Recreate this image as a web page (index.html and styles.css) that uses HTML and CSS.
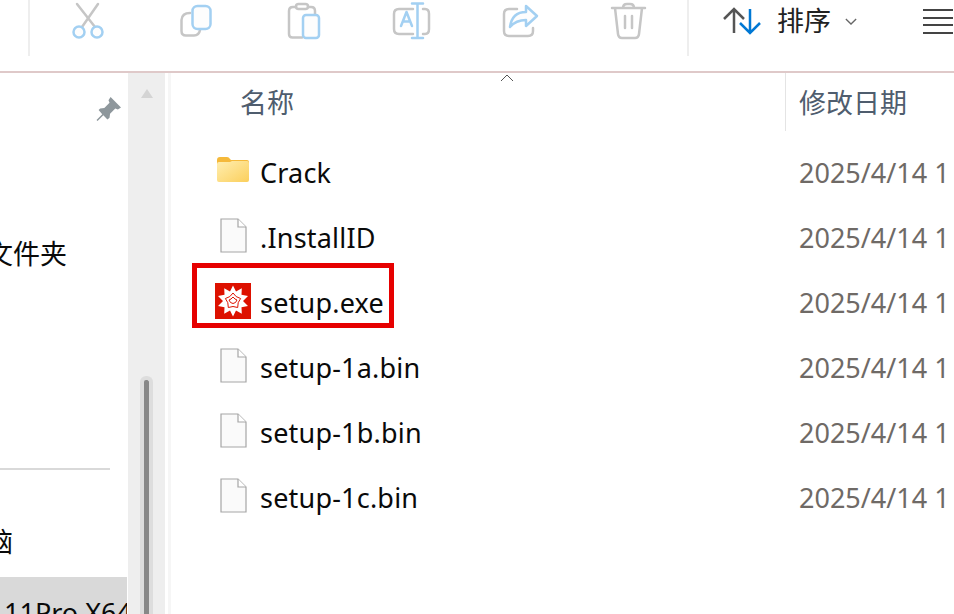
FILE: index.html
```html
<!DOCTYPE html>
<html lang="zh-CN">
<head>
  <meta charset="UTF-8">
  <meta name="viewport" content="width=device-width, initial-scale=1.0">
  <title>文件资源管理器</title>
  <link rel="stylesheet" href="styles.css">
</head>
<body>
  <div class="toolbar">
    <div class="sep"></div>
    <div class="tools">
      <!-- cut -->
      <svg class="tool" viewBox="0 0 48 48">
        <path class="gray" d="M13 4 L31 27 M34 4 L18 27"/>
        <circle class="blue" cx="15" cy="32" r="5.5"/>
        <circle class="blue" cx="33" cy="32" r="5.5"/>
      </svg>
      <!-- copy -->
      <svg class="tool" viewBox="0 0 48 48">
        <path class="gray" d="M18 13 Q10 13 9.5 20 V31 Q9.5 35.5 14 35.5 H22 Q27 35.5 28 30"/>
        <rect class="blue" x="20.5" y="6" width="18" height="23" rx="5"/>
      </svg>
      <!-- paste -->
      <svg class="tool" viewBox="0 0 48 48">
        <path class="gray" d="M16 7 H13 Q9 7 9 11 V34 Q9 37.5 12.500 37.500 H22 M28 7 H31 Q35 7 35 11 V14"/>
        <rect class="gray" x="16" y="4" width="12" height="5" rx="2.500"/>
        <rect class="blue" x="23" y="15" width="16" height="23" rx="3"/>
      </svg>
      <!-- rename -->
      <svg class="tool" viewBox="0 0 48 48">
        <path class="gray" d="M25 9 H11 Q6 9 6 14 V29 Q6 34 11 34 H25 M35 9 H37 Q41 9 41 14 V29 Q41 34 37 34 H35"/>
        <path class="blue" d="M24 3.500 H35 M24 38 H35 M29.500 3.500 V38 M13 26 L18.500 12 L24 26 M15 21.500 H22"/>
      </svg>
      <!-- share -->
      <svg class="tool" viewBox="0 0 48 48">
        <path class="gray" d="M21 9 H13 Q8 9 8 14 V31 Q8 36 13 36 H32 Q37 36 37 31 V28"/>
        <path class="blue" d="M30 6 L41 16 L30 26 V20 Q20 20 14 27 Q16 12 30 12 Z"/>
      </svg>
      <!-- delete -->
      <svg class="tool" viewBox="0 0 48 48">
        <path class="gray" d="M8 8 H41 M19 8 Q19 4 23 4 H26 Q30 4 30 8 M11 8 L14 34 Q14.500 38 18 38 H31 Q34.500 38 35 34 L38 8 M21 16 V28 M28 16 V28"/>
      </svg>
    </div>
    <div class="sep sep-right"></div>
    <div class="sort">
      <svg class="sort-arrows" viewBox="0 0 38 28">
        <path class="up" d="M12 26 V2 M2 12 L12 2 L22 12"/>
        <path class="down" d="M28 2 V26 M18 16 L28 26 L38 16"/>
      </svg>
      <span class="sort-label">排序</span>
      <svg class="chevron" viewBox="0 0 14 8"><path d="M1 1 L7 7 L13 1"/></svg>
    </div>
    <svg class="view" viewBox="0 0 30 26">
      <path d="M0 2 H30 M0 10 H30 M0 17 H30 M0 25 H30"/>
    </svg>
  </div>

  <div class="content">
    <div class="sidebar">
      <div class="pin-row">
        <svg class="pin" viewBox="0 0 24 24">
          <path d="M14 0 L24 10 L21 12 L18.500 11 L13.500 16 L13 20 L11 21.500 L7 17.500 L1.500 23 L0.500 22 L6 16.500 L2.500 12.500 L4 11 L8 10.500 L13 5.500 L12 3 Z"/>
        </svg>
      </div>
      <div class="side-text folder-text"><span>文件夹</span></div>
      <div class="side-line"></div>
      <div class="side-text pc-text"><span>脑</span></div>
      <div class="side-selected">11Pro X64</div>
    </div>

    <div class="scrollbar">
      <div class="scroll-up"></div>
      <div class="scroll-thumb"></div>
    </div>

    <div class="main">
      <div class="list-head">
        <div class="head-name">名称</div>
        <div class="head-date">修改日期</div>
        <svg class="sort-mark" viewBox="0 0 14 8"><path d="M1 7 L7 1 L13 7"/></svg>
      </div>
      <div class="rows">
        <div class="row">
          <div class="icon icon-folder">
            <svg class="folder" viewBox="0 0 32 25">
              <defs>
                <linearGradient id="folderFill" x1="0" y1="0" x2="1" y2="1">
                  <stop offset="0" stop-color="#ffeeb0"/>
                  <stop offset="1" stop-color="#fbcf5c"/>
                </linearGradient>
              </defs>
              <path fill="#f5b93a" d="M0 3 Q0 0 3 0 H10 Q12 0 13 2 L14 3 H30 Q32 3 32 5 V10 H0 Z"/>
              <path fill="url(#folderFill)" d="M0 7 Q0 5 2 5 H13 L15 4 H30 Q32 4 32 6 V23 Q32 25 30 25 H2 Q0 25 0 23 Z"/>
            </svg>
          </div>
          <div class="name">Crack</div>
          <div class="date">2025/4/14 1</div>
        </div>
        <div class="row">
          <div class="icon">
            <svg class="file" viewBox="0 0 27 35"><path class="sheet" d="M1 1 H18 L26 9 V34 H1 Z"/><path class="fold" d="M18 1 V9 H26"/></svg>
          </div>
          <div class="name">.InstallID</div>
          <div class="date">2025/4/14 1</div>
        </div>
        <div class="row">
          <div class="marked"></div>
          <div class="icon">
            <svg class="app" viewBox="0 0 36 36">
              <rect width="36" height="36" fill="#dd1100"/>
              <polygon fill="#fff" points="18,2.500 21,8.500 26.800,5.200 26.500,11.800 33,13 28,18 33,23 26.500,24.200 26.800,30.800 21,27.500 18,33.500 15,27.500 9.200,30.800 9.500,24.200 3,23 8,18 3,13 9.500,11.800 9.200,5.200 15,8.500"/>
              <polygon class="app-star" points="18,10 21.200,13.600 25.600,15.500 23.200,19.700 22.700,24.500 18,23.500 13.300,24.500 12.800,19.700 10.400,15.500 14.800,13.600"/>
              <polygon class="app-star" points="18,14 20,16 22,17 20.500,19.500 18,20.500 15.500,19.500 14,17 16,16"/>
            </svg>
          </div>
          <div class="name">setup.exe</div>
          <div class="date">2025/4/14 1</div>
        </div>
        <div class="row">
          <div class="icon">
            <svg class="file" viewBox="0 0 27 35"><path class="sheet" d="M1 1 H18 L26 9 V34 H1 Z"/><path class="fold" d="M18 1 V9 H26"/></svg>
          </div>
          <div class="name">setup-1a.bin</div>
          <div class="date">2025/4/14 1</div>
        </div>
        <div class="row">
          <div class="icon">
            <svg class="file" viewBox="0 0 27 35"><path class="sheet" d="M1 1 H18 L26 9 V34 H1 Z"/><path class="fold" d="M18 1 V9 H26"/></svg>
          </div>
          <div class="name">setup-1b.bin</div>
          <div class="date">2025/4/14 1</div>
        </div>
        <div class="row">
          <div class="icon">
            <svg class="file" viewBox="0 0 27 35"><path class="sheet" d="M1 1 H18 L26 9 V34 H1 Z"/><path class="fold" d="M18 1 V9 H26"/></svg>
          </div>
          <div class="name">setup-1c.bin</div>
          <div class="date">2025/4/14 1</div>
        </div>
      </div>
    </div>
  </div>
</body>
</html>
```

FILE: styles.css
```css
html, body { margin: 0; height: 100%; overflow: hidden; }
body {
  width: 954px;
  height: 614px;
  background: #fff;
  font-family: "Noto Sans", "Noto Sans CJK SC", sans-serif;
  font-size: 27px;
  color: #0a0a0a;
}
svg { display: block; fill: none; flex: none; }

.toolbar {
  display: flex;
  align-items: flex-start;
  height: 71px;
  padding-left: 28px;
  border-bottom: 2px solid #dfc9c9;
  box-sizing: content-box;
  overflow: hidden;
}
.sep { width: 2px; height: 56px; background: #eee; flex: none; }
.sep-right { margin-left: 5px; }
.tools { display: flex; margin-left: 4px; flex: none; }
.tool { width: 48px; height: 48px; padding: 0 30px; box-sizing: content-box; }
.tool .gray { stroke: #c6c6c6; stroke-width: 2.5; stroke-linecap: round; stroke-linejoin: round; }
.tool .blue { stroke: #a3d0f2; stroke-width: 2.5; stroke-linecap: round; stroke-linejoin: round; fill: #fdfdfd; }

.sort { display: flex; align-items: center; height: 42px; margin-left: 33px; flex: none; }
.sort-arrows { width: 38px; height: 28px; overflow: visible; }
.sort-arrows path { stroke-width: 2.5; }
.sort-arrows .up { stroke: #555; }
.sort-arrows .down { stroke: #0078d4; }
.sort-label { margin-left: 17px; color: #222; line-height: 44px; }
.chevron { width: 12px; height: 7px; margin-left: 14px; }
.chevron path { stroke: #666; stroke-width: 1.5; }
.view { width: 30px; height: 26px; margin: 8px 0 0 66px; }
.view path { stroke: #444; stroke-width: 2; }

.content { display: flex; height: 541px; }

.sidebar { width: 128px; flex: none; overflow: hidden; display: flex; flex-direction: column; }
.pin-row { display: flex; justify-content: flex-end; padding: 24px 7px 0 0; height: 52px; }
.pin { width: 25px; height: 25px; }
.pin path { fill: #8e979c; }
.side-text { display: flex; justify-content: flex-end; overflow: hidden; line-height: 38px; height: 38px; white-space: nowrap; }
.folder-text { width: 67px; margin-top: 86px; }
.side-line { width: 110px; height: 2px; background: #d9d9d9; margin-top: 195px; }
.pc-text { width: 13px; margin-top: 53px; }
.side-selected {
  width: 127px;
  height: 37px;
  margin-top: 16px;
  padding: 17px 0 0 4px;
  box-sizing: border-box;
  background: #d9d9d9;
  line-height: 38px;
  white-space: nowrap;
  overflow: hidden;
}

.scrollbar { width: 37px; flex: none; background: #eee; position: relative; display: flex; flex-direction: column; align-items: center; }
.scroll-up {
  width: 0; height: 0;
  margin-top: 16px;
  border-left: 6px solid transparent;
  border-right: 6px solid transparent;
  border-bottom: 9px solid #d4d4d4;
}
.scroll-thumb {
  width: 5px;
  flex: 1;
  margin-top: 278px;
  background: #888;
  border: solid #ddd;
  border-width: 4px 4px 0;
  border-radius: 6px 6px 0 0;
}

.main { flex: 1; min-width: 0; margin-left: 3px; border-left: 3px solid #f6f6f6; overflow: hidden; }
.list-head { display: flex; height: 58px; position: relative; line-height: 60px; color: #4f5d6e; }
.head-name { width: 615px; height: 58px; padding-left: 69px; box-sizing: border-box; border-right: 1px solid #e4e4e4; flex: none; }
.head-date { padding-left: 13px; white-space: nowrap; }
.sort-mark { position: absolute; left: 329px; top: 1px; width: 14px; height: 8px; }
.sort-mark path { stroke: #555; stroke-width: 1; }

.rows { padding-top: 9px; }
.row { display: flex; align-items: center; height: 65px; position: relative; }
.icon { width: 36px; margin: 0 0 4px 44px; display: flex; justify-content: center; flex: none; }
.icon-folder { margin-bottom: 6px; }
.name { width: 525px; margin-left: 9px; flex: none; letter-spacing: 0.2px; }
.date { margin-left: 14px; color: #6f6a66; white-space: nowrap; }
.folder { width: 32px; height: 25px; }
.file { width: 27px; height: 35px; }
.sheet { fill: #fafafa; stroke: #a6a6a6; stroke-width: 1.2; }
.fold { stroke: #a6a6a6; stroke-width: 1.2; fill: #fff; }
.app { width: 36px; height: 36px; }
.app-star { fill: none; stroke: #dd1100; stroke-width: 1; }
.marked {
  position: absolute;
  left: 21px;
  top: -7px;
  width: 202px;
  height: 65px;
  box-sizing: border-box;
  border: 5px solid #e60000;
}
```
